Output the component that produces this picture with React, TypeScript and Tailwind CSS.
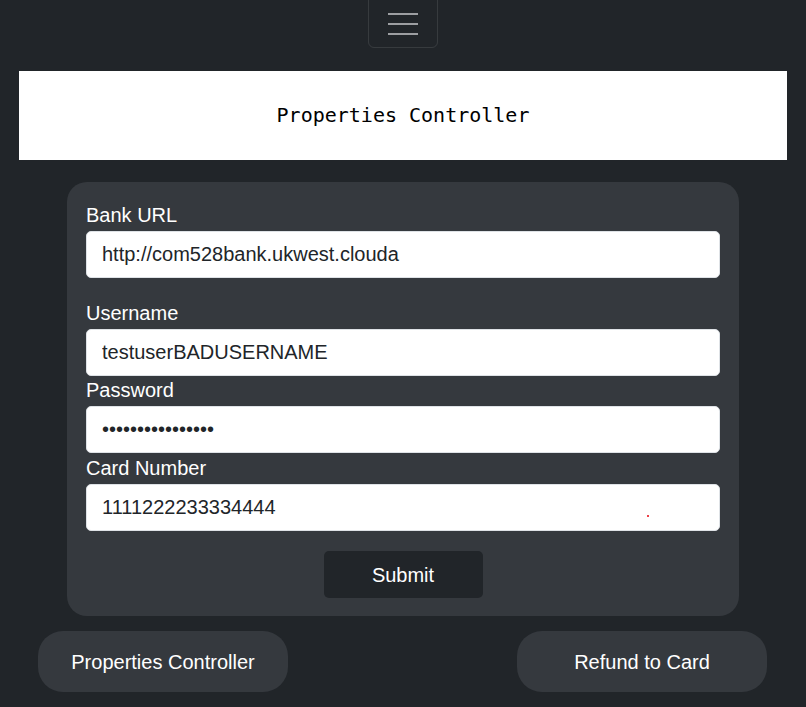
import * as React from "react";

const fields = [
  { label: "Bank URL", value: "http://com528bank.ukwest.clouda", type: "text", gap: "mb-[22px]" },
  { label: "Username", value: "testuserBADUSERNAME", type: "text", gap: "mb-[1px]" },
  { label: "Password", value: "testpassword1234", type: "password", gap: "mb-[2px]" },
  { label: "Card Number", value: "1111222233334444", type: "text", gap: "" },
];

export default function App() {
  return (
    <main
      className="min-h-[707px] bg-[#212529] text-white"
      style={{ fontFamily: '"Liberation Sans", Arial, sans-serif' }}
    >
      <div className="flex justify-center">
        <button
          type="button"
          aria-label="Toggle navigation"
          className="-mt-[6px] flex h-[54px] w-[70px] flex-col items-center justify-center gap-[8px] rounded-[6px] border border-white/10 pt-[6px]"
        >
          <span className="block h-[2px] w-[30px] bg-[#9c9ea1]" />
          <span className="block h-[2px] w-[30px] bg-[#9c9ea1]" />
          <span className="block h-[2px] w-[30px] bg-[#9c9ea1]" />
        </button>
      </div>

      <header className="mx-[19px] mt-[23px] flex h-[89px] items-center justify-center bg-white">
        <h1
          className="-mt-[2px] text-[20px] text-black"
          style={{ fontFamily: '"DejaVu Sans Mono", "Liberation Mono", monospace' }}
        >
          Properties Controller
        </h1>
      </header>

      <form
        className="mx-[67px] mt-[22px] flex flex-col rounded-[20px] bg-[#35393e] px-[19px] pb-[18px] pt-[20px]"
        onSubmit={(e) => e.preventDefault()}
      >
        {fields.map((f, i) => (
          <label key={f.label} className={`flex flex-col ${f.gap}`}>
            <span className="h-[27px] text-[20px] leading-[27px]">{f.label}</span>
            <span className="relative mt-[2px] block">
              <input
                className="h-[47px] w-full rounded-[5px] border border-[#dee2e6] bg-white px-[15px] text-[20px] text-[#212529] outline-none"
                type={f.type}
                defaultValue={f.value}
              />
              {i === 3 && (
                <span className="absolute left-[561px] top-[31px] h-[2px] w-[2px] rounded-full bg-red-600" />
              )}
            </span>
          </label>
        ))}

        <button
          type="submit"
          className="mx-auto mt-[20px] h-[47px] w-[159px] rounded-[5px] bg-[#212529] text-[20px] text-white"
        >
          Submit
        </button>
      </form>

      <div className="mt-[15px] flex justify-between pl-[38px] pr-[39px]">
        <button className="h-[61px] w-[250px] rounded-[25px] bg-[#35393e] text-[20px] text-white">
          Properties Controller
        </button>
        <button className="h-[61px] w-[250px] rounded-[25px] bg-[#35393e] text-[20px] text-white">
          Refund to Card
        </button>
      </div>
    </main>
  );
}
